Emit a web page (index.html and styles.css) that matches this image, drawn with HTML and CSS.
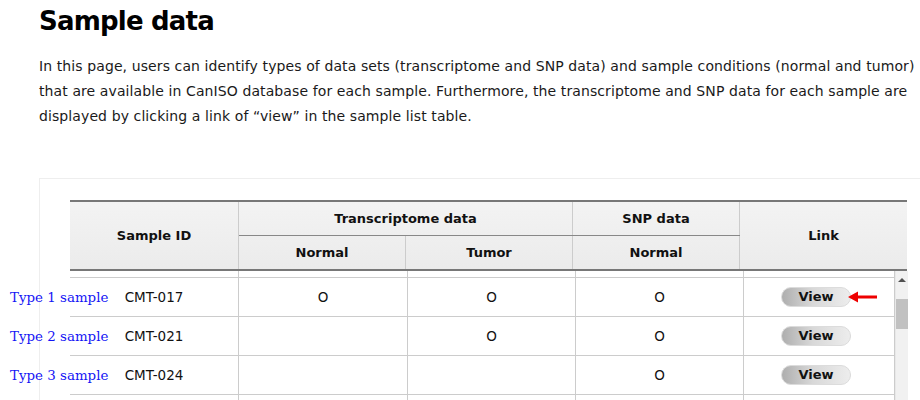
FILE: index.html
```html
<!DOCTYPE html>
<html>
<head>
<meta charset="utf-8">
<link rel="stylesheet" href="styles.css">
</head>
<body>
<div class="page">
  <h1 class="title">Sample data</h1>
  <p class="intro">In this page, users can identify types of data sets (transcriptome and SNP data) and sample conditions (normal and tumor) that are available in CanISO database for each sample. Furthermore, the transcriptome and SNP data for each sample are displayed by clicking a link of “view” in the sample list table.</p>
  <div class="box">
    <table class="thead">
      <tr>
        <th rowspan="2" class="c1">Sample ID</th>
        <th colspan="2" class="grp">Transcriptome data</th>
        <th class="grp">SNP data</th>
        <th rowspan="2" class="c5">Link</th>
      </tr>
      <tr>
        <th class="c2">Normal</th>
        <th class="c3">Tumor</th>
        <th class="c4">Normal</th>
      </tr>
    </table>
    <div class="scroll">
      <table class="tbody">
        <tr class="spacer"><td class="c1"></td><td class="c2"></td><td class="c3"></td><td class="c4"></td><td class="c5"></td></tr>
        <tr>
          <td class="c1"><span class="tag">Type 1 sample</span>CMT-017</td>
          <td class="c2">O</td><td class="c3">O</td><td class="c4">O</td>
          <td class="c5"><span class="btn">View<svg class="arrow" width="30" height="12" viewBox="0 0 30 12"><path d="M0 6 L10 0.5 L10 4.5 L29 4.5 L29 7.5 L10 7.5 L10 11.5 Z" fill="#ee0000"/></svg></span></td>
        </tr>
        <tr>
          <td class="c1"><span class="tag">Type 2 sample</span>CMT-021</td>
          <td class="c2"></td><td class="c3">O</td><td class="c4">O</td>
          <td class="c5"><span class="btn">View</span></td>
        </tr>
        <tr>
          <td class="c1"><span class="tag">Type 3 sample</span>CMT-024</td>
          <td class="c2"></td><td class="c3"></td><td class="c4">O</td>
          <td class="c5"><span class="btn">View</span></td>
        </tr>
        <tr>
          <td class="c1"></td><td class="c2"></td><td class="c3"></td><td class="c4"></td><td class="c5"></td>
        </tr>
      </table>
      <div class="sbar">
        <div class="sbar-up"></div>
        <div class="sbar-thumb"></div>
      </div>
    </div>
  </div>
</div>
</body>
</html>
```
FILE: styles.css
```css
html, body {
  margin: 0;
  padding: 0;
  overflow: hidden;
  background: #fff;
}
.page {
  padding-left: 39px;
  padding-top: 4px;
  font-family: "DejaVu Sans", Verdana, sans-serif;
  color: #111;
  width: 1000px;
}
.title {
  margin: 0;
  font-size: 26px;
  letter-spacing: -0.8px;
  line-height: 34px;
  font-weight: bold;
  color: #000;
}
.intro {
  margin: 16px 0 0 0;
  width: 878px;
  font-size: 14px;
  letter-spacing: 0.1px;
  line-height: 25px;
  color: #1a1a1a;
}
.box {
  margin-top: 49px;
  border: 1px solid #eeeeee;
  border-right: none;
  padding: 21px 0 0 30px;
  height: 300px;
  position: relative;
}
table {
  border-collapse: collapse;
  table-layout: fixed;
}
.thead {
  width: 837px;
  border-top: 2px solid #777;
  border-bottom: 2px solid #777;
  background: linear-gradient(#f3f3f3, #ebebeb);
}
.thead th {
  font-size: 13px;
  font-weight: bold;
  color: #111;
  border-left: 1px solid #cccccc;
  border-right: 1px solid #cccccc;
  padding: 0;
  text-align: center;
}
.thead tr:first-child th { height: 33px; }
.thead tr:last-child th { height: 33px; }
.thead th.grp { border-bottom: 1px solid #888; }
.thead th.c1 { width: 168px; border-left: none; }
.thead th.c2 { width: 168px; }
.thead th.c3 { width: 167px; }
.thead th.c4 { width: 167px; }
.thead th.c5 { width: 167px; border-right: none; }
.scroll {
  display: flex;
  width: 837px;
}
.tbody {
  width: 820px;
}
.tbody td {
  border: 1px solid #cccccc;
  border-top: none;
  height: 38px;
  padding: 0;
  text-align: center;
  font-size: 13.5px;
  color: #111;
}
.tbody td.c1 { width: 168px; border-left: none; position: relative; }
.tbody td.c2 { width: 168px; }
.tbody td.c3 { width: 167px; }
.tbody td.c4 { width: 167px; }
.tbody td.c5 { width: 150px; }
.tbody tr.spacer td { height: 6px; border-bottom: 1px solid #cccccc; }
.tag {
  position: absolute;
  left: -60px;
  top: 50%;
  transform: translateY(-50%);
  font-family: "DejaVu Serif", "Times New Roman", serif;
  font-size: 13.4px;
  color: #1414f5;
  white-space: nowrap;
}
.btn {
  position: relative;
  display: inline-block;
  width: 68px;
  height: 18px;
  line-height: 18px;
  border: 1px solid #dcdcdc;
  border-radius: 10px;
  background: linear-gradient(to right, #aeaeae, #d8d8d8 45%, #ededed);
  font-weight: bold;
  font-size: 13px;
  color: #111;
  vertical-align: middle;
  margin-right: 6px;
}
.arrow {
  position: absolute;
  left: 66px;
  top: 3px;
}
.sbar {
  width: 17px;
  background: #f1f1f1;
  border-left: 1px solid #e8e8e8;
  display: flex;
  flex-direction: column;
  align-items: center;
  height: 130px;
}
.sbar-up {
  margin-top: 7px;
  width: 0;
  height: 0;
  border-left: 4px solid transparent;
  border-right: 4px solid transparent;
  border-bottom: 4px solid #505050;
}
.sbar-thumb {
  margin-top: 17px;
  width: 12px;
  height: 30px;
  background: #c1c1c1;
}
```
